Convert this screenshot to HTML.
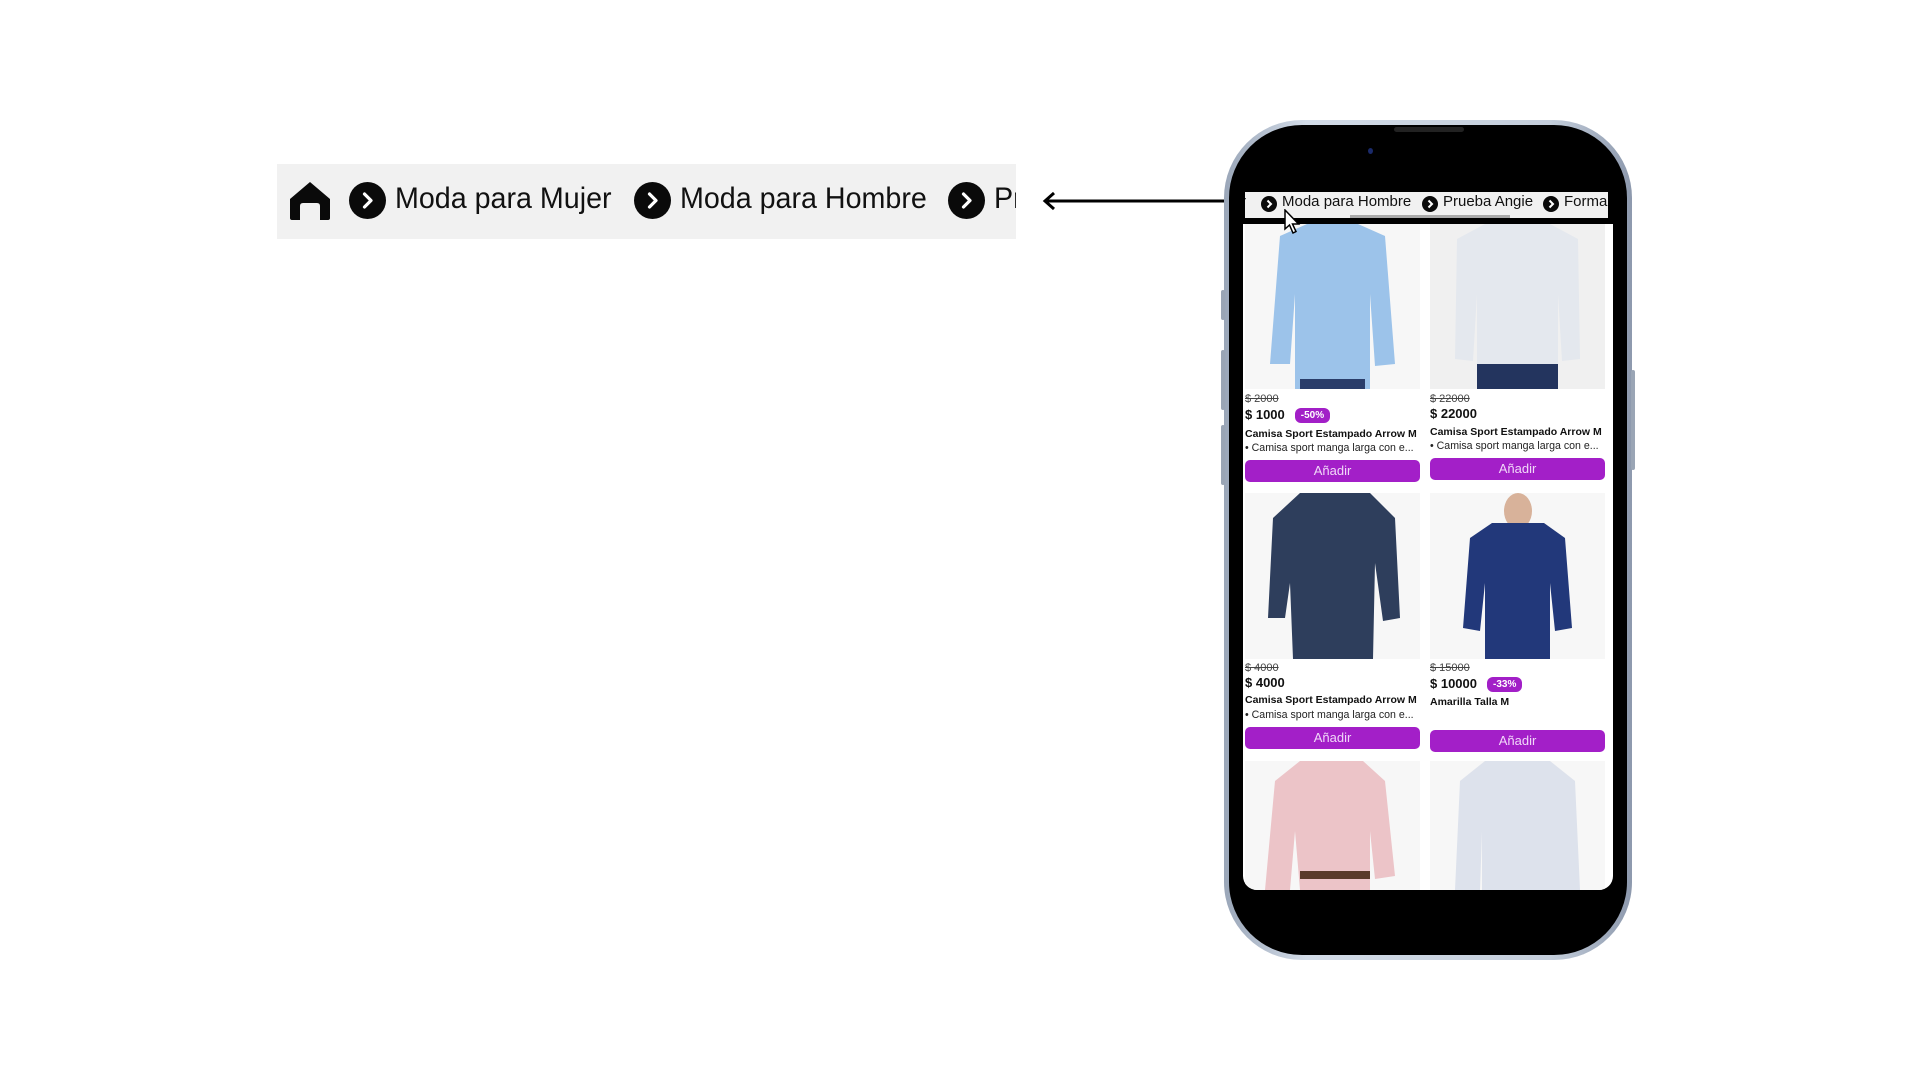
<!DOCTYPE html>
<html><head><meta charset="utf-8"><style>
*{margin:0;padding:0;box-sizing:border-box}
body{width:1920px;height:1080px;background:#fff;position:relative;overflow:hidden;font-family:"Liberation Sans",sans-serif;color:#111}
.abs{position:absolute}
.bc{left:277px;top:164px;width:739px;height:75px;background:#f1f1f1;overflow:hidden;white-space:nowrap}
.circ{position:absolute;border-radius:50%;background:#0a0a0a}
.circ svg{position:absolute;left:0;top:0;width:100%;height:100%}
.bt{position:absolute;font-size:30px;color:#111;top:18px;transform:scaleX(.955);transform-origin:left}
.phone{left:1224px;top:120px;width:408px;height:840px;border-radius:78px;background:linear-gradient(90deg,#9aa6b8,#d3dce8 20%,#c4cedb 80%,#8d99ad);}
.inner{left:1229px;top:125px;width:398px;height:830px;border-radius:73px;background:#000}
.screen{left:1243px;top:224px;width:370px;height:666px;background:#fff;border-radius:0 0 14px 14px;overflow:hidden}
.pbar{left:1245px;top:192px;width:363px;height:26px;background:#f1f1f1;overflow:hidden;white-space:nowrap}
.pt{position:absolute;top:1px;font-size:15px;color:#111}
.pc{position:absolute;top:4px;width:16px;height:16px;border-radius:50%;background:#0a0a0a}
.pc svg{width:16px;height:16px;position:absolute;left:0;top:0}
.img{position:absolute;width:175px;background:#f7f7f7;overflow:hidden}
.img svg{width:100%;height:100%}
.old{position:absolute;font-size:11px;color:#444;text-decoration:line-through}
.pr{position:absolute;font-size:13px;font-weight:bold}
.tag{display:inline-block;background:#a21fc7;color:#fff;font-size:10px;font-weight:bold;border-radius:6px;padding:2px 6px;margin-left:10px;vertical-align:1px}
.nm{position:absolute;font-size:10.5px;font-weight:bold;white-space:nowrap}
.ds{position:absolute;font-size:10.6px;color:#222;white-space:nowrap}
.btn{position:absolute;width:175px;height:22px;background:#a31fc8;border-radius:5px;color:#f0d8f8;font-size:13px;text-align:center;line-height:22px}
</style></head><body>

<div class="abs bc">
  <svg class="abs" style="left:12px;top:17px" width="42" height="40" viewBox="0 0 42 40"><path d="M21 1 L41 18 L41 37 Q41 39 39 39 L31 39 L31 25 Q31 22 28 22 L14 22 Q11 22 11 25 L11 39 L3 39 Q1 39 1 37 L1 18 Z" fill="#0a0a0a"/></svg>
  <div class="circ" style="left:72px;top:18px;width:37px;height:37px"><svg viewBox="0 0 37 37"><path d="M15.5 12 L22 18.5 L15.5 25" stroke="#fff" stroke-width="3.2" fill="none" stroke-linecap="round" stroke-linejoin="round"/></svg></div>
  <div class="bt" style="left:118px">Moda para Mujer</div>
  <div class="circ" style="left:357px;top:18px;width:37px;height:37px"><svg viewBox="0 0 37 37"><path d="M15.5 12 L22 18.5 L15.5 25" stroke="#fff" stroke-width="3.2" fill="none" stroke-linecap="round" stroke-linejoin="round"/></svg></div>
  <div class="bt" style="left:403px">Moda para Hombre</div>
  <div class="circ" style="left:671px;top:18px;width:37px;height:37px"><svg viewBox="0 0 37 37"><path d="M15.5 12 L22 18.5 L15.5 25" stroke="#fff" stroke-width="3.2" fill="none" stroke-linecap="round" stroke-linejoin="round"/></svg></div>
  <div class="bt" style="left:717px">Pr</div>
</div>

<svg class="abs" style="left:1040px;top:190px" width="210" height="22"><line x1="6" y1="11" x2="205" y2="11" stroke="#000" stroke-width="3"/><path d="M14 3 L5 11 L14 19" stroke="#000" stroke-width="3" fill="none"/></svg>

<div class="abs phone"></div>
<div class="abs" style="left:1221px;top:290px;width:4px;height:30px;background:#9aa5b5;border-radius:2px"></div>
<div class="abs" style="left:1221px;top:350px;width:4px;height:60px;background:#9aa5b5;border-radius:2px"></div>
<div class="abs" style="left:1221px;top:425px;width:4px;height:60px;background:#9aa5b5;border-radius:2px"></div>
<div class="abs" style="left:1631px;top:370px;width:4px;height:100px;background:#9aa5b5;border-radius:2px"></div>
<div class="abs inner"></div>
<div class="abs" style="left:1394px;top:127px;width:70px;height:5px;border-radius:3px;background:#222"></div>
<div class="abs" style="left:1368px;top:148px;width:5px;height:6px;border-radius:50%;background:#1a2a6a"></div>

<div class="abs pbar">
  <div class="pt" style="left:-4px">r</div>
  <div class="pc" style="left:16px"><svg viewBox="0 0 16 16"><path d="M6.5 4.5 L10 8 L6.5 11.5" stroke="#fff" stroke-width="2" fill="none"/></svg></div>
  <div class="pt" style="left:37px">Moda para Hombre</div>
  <div class="pc" style="left:177px"><svg viewBox="0 0 16 16"><path d="M6.5 4.5 L10 8 L6.5 11.5" stroke="#fff" stroke-width="2" fill="none"/></svg></div>
  <div class="pt" style="left:198px">Prueba Angie</div>
  <div class="pc" style="left:298px"><svg viewBox="0 0 16 16"><path d="M6.5 4.5 L10 8 L6.5 11.5" stroke="#fff" stroke-width="2" fill="none"/></svg></div>
  <div class="pt" style="left:319px">Forma</div>
  <div style="position:absolute;left:105px;top:23px;width:160px;height:3px;background:#aaa"></div>
</div>

<div class="abs screen">
  <div class="img" style="left:2px;top:0;height:165px"><svg viewBox="0 0 175 165"><path d="M62 0 L113 0 L140 12 L150 140 L130 142 L125 70 L125 165 L50 165 L50 70 L45 140 L25 140 L35 12 Z" fill="#9cc3ea"/><rect x="55" y="155" width="65" height="10" fill="#2a3d6a"/></svg></div>
  <div class="img" style="left:187px;top:0;height:165px;background:#f0f0f0"><svg viewBox="0 0 175 165"><path d="M55 0 L120 0 L148 15 L150 135 L132 137 L128 70 L128 150 L47 150 L47 70 L43 137 L25 135 L27 15 Z" fill="#e4e8ee"/><rect x="47" y="140" width="81" height="25" fill="#23345e"/></svg></div>
  <div class="old" style="left:2px;top:169px">$ 2000</div>
  <div class="pr" style="left:2px;top:183px">$ 1000<span class="tag">-50%</span></div>
  <div class="nm" style="left:2px;top:204px">Camisa Sport Estampado Arrow M</div>
  <div class="ds" style="left:2px;top:218px">• Camisa sport manga larga con e...</div>
  <div class="btn" style="left:2px;top:236px">Añadir</div>
  <div class="old" style="left:187px;top:169px">$ 22000</div>
  <div class="pr" style="left:187px;top:182px">$ 22000</div>
  <div class="nm" style="left:187px;top:202px">Camisa Sport Estampado Arrow M</div>
  <div class="ds" style="left:187px;top:216px">• Camisa sport manga larga con e...</div>
  <div class="btn" style="left:187px;top:234px">Añadir</div>
  <div class="img" style="left:2px;top:269px;height:166px"><svg viewBox="0 0 175 166"><path d="M55 0 L125 0 L150 25 L155 125 L138 128 L130 70 L128 166 L48 166 L45 90 L40 125 L23 125 L28 25 Z" fill="#2e3e5c"/></svg></div>
  <div class="img" style="left:187px;top:269px;height:166px"><svg viewBox="0 0 175 166"><ellipse cx="88" cy="18" rx="14" ry="18" fill="#d8b29a"/><path d="M62 30 L114 30 L135 45 L142 135 L125 138 L120 90 L120 166 L55 166 L55 90 L50 138 L33 135 L40 45 Z" fill="#22387a"/></svg></div>
  <div class="old" style="left:2px;top:438px">$ 4000</div>
  <div class="pr" style="left:2px;top:451px">$ 4000</div>
  <div class="nm" style="left:2px;top:470px">Camisa Sport Estampado Arrow M</div>
  <div class="ds" style="left:2px;top:485px">• Camisa sport manga larga con e...</div>
  <div class="btn" style="left:2px;top:503px">Añadir</div>
  <div class="old" style="left:187px;top:438px">$ 15000</div>
  <div class="pr" style="left:187px;top:452px">$ 10000<span class="tag">-33%</span></div>
  <div class="nm" style="left:187px;top:472px">Amarilla Talla M</div>
  <div class="btn" style="left:187px;top:506px">Añadir</div>
  <div class="img" style="left:2px;top:537px;height:129px"><svg viewBox="0 0 175 129"><path d="M55 0 L118 0 L140 20 L150 115 L130 118 L125 70 L125 129 L55 129 L50 70 L45 129 L20 129 L30 20 Z" fill="#ecc4c8"/><rect x="55" y="110" width="70" height="8" fill="#5a3a2a"/></svg></div>
  <div class="img" style="left:187px;top:537px;height:129px"><svg viewBox="0 0 175 129"><path d="M55 0 L120 0 L145 20 L150 129 L125 129 L125 70 L125 129 L52 129 L52 70 L50 129 L25 129 L30 20 Z" fill="#dde2ec"/></svg></div>
</div>
<svg class="abs" style="left:1283px;top:209px" width="18" height="26" viewBox="0 0 18 26"><path d="M2 1 L2 20 L6.5 16 L10 24 L13 22.5 L9.5 15 L15.5 15 Z" fill="#fff" stroke="#000" stroke-width="1.5"/></svg>
</body></html>
